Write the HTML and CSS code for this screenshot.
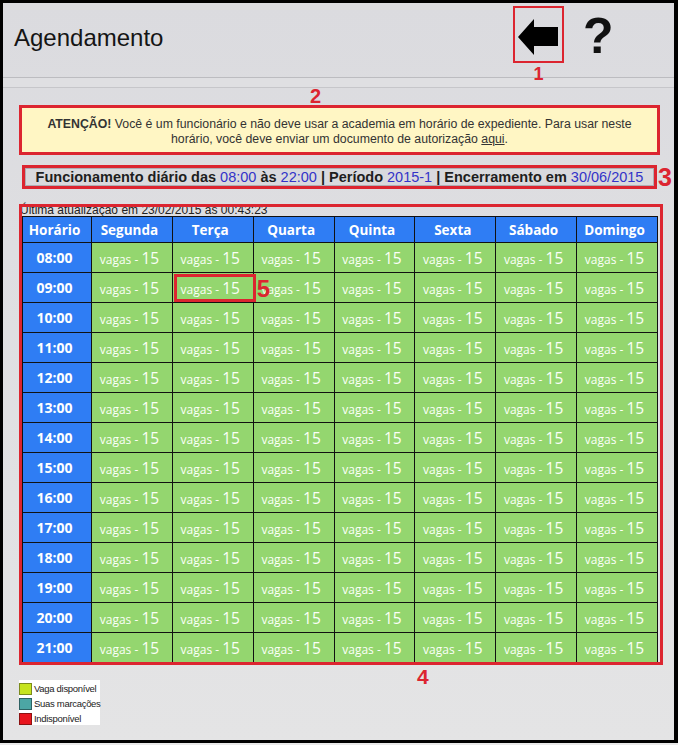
FILE: index.html
```html
<!DOCTYPE html>
<html lang="pt-BR">
<head>
<meta charset="utf-8">
<title>Agendamento</title>
<link rel="stylesheet" href="styles.css">
</head>
<body>
<div class="frame">
  <header class="topbar">
    <h1 class="title">Agendamento</h1>
    <div class="actions">
      <div class="back">
        <svg class="arrow" width="47" height="53" viewBox="0 0 47 53"><polygon points="3,29 19,11 19,19 43,19 43,38 19,38 19,47" fill="#000"/></svg>
        <span class="num num-1">1</span>
      </div>
      <span class="help">?</span>
    </div>
  </header>
  <div class="subbar"></div>
  <main class="content">
    <div class="warning">
      <span class="num num-2">2</span>
      <b>ATENÇÃO!</b> Você é um funcionário e não deve usar a academia em horário de expediente. Para usar neste horário, você deve enviar um documento de autorização <u>aqui</u>.
    </div>
    <div class="info">
      <div class="info-inner"><b>Funcionamento diário das</b> <span class="val">08:00</span> <b>às</b> <span class="val">22:00</span> <b>| Período</b> <span class="val">2015-1</span> <b>| Encerramento em</b> <span class="val">30/06/2015</span></div>
      <span class="num num-3">3</span>
    </div>
    <div class="schedule">
      <div class="updated">Última atualização em 23/02/2015 às 00:43:23</div>
      <table class="grid">
        <colgroup><col class="c-time"><col><col><col><col><col><col><col></colgroup>
        <thead>
          <tr><th>Horário</th><th>Segunda</th><th>Terça</th><th>Quarta</th><th>Quinta</th><th>Sexta</th><th>Sábado</th><th>Domingo</th></tr>
        </thead>
        <tbody>
          <tr><td class="time">08:00</td><td class="slot">vagas - <span class="n">15</span></td><td class="slot">vagas - <span class="n">15</span></td><td class="slot">vagas - <span class="n">15</span></td><td class="slot">vagas - <span class="n">15</span></td><td class="slot">vagas - <span class="n">15</span></td><td class="slot">vagas - <span class="n">15</span></td><td class="slot">vagas - <span class="n">15</span></td></tr>
          <tr><td class="time">09:00</td><td class="slot">vagas - <span class="n">15</span></td><td class="slot marked">vagas - <span class="n">15</span><span class="mark"></span><span class="num num-5">5</span></td><td class="slot">vagas - <span class="n">15</span></td><td class="slot">vagas - <span class="n">15</span></td><td class="slot">vagas - <span class="n">15</span></td><td class="slot">vagas - <span class="n">15</span></td><td class="slot">vagas - <span class="n">15</span></td></tr>
          <tr><td class="time">10:00</td><td class="slot">vagas - <span class="n">15</span></td><td class="slot">vagas - <span class="n">15</span></td><td class="slot">vagas - <span class="n">15</span></td><td class="slot">vagas - <span class="n">15</span></td><td class="slot">vagas - <span class="n">15</span></td><td class="slot">vagas - <span class="n">15</span></td><td class="slot">vagas - <span class="n">15</span></td></tr>
          <tr><td class="time">11:00</td><td class="slot">vagas - <span class="n">15</span></td><td class="slot">vagas - <span class="n">15</span></td><td class="slot">vagas - <span class="n">15</span></td><td class="slot">vagas - <span class="n">15</span></td><td class="slot">vagas - <span class="n">15</span></td><td class="slot">vagas - <span class="n">15</span></td><td class="slot">vagas - <span class="n">15</span></td></tr>
          <tr><td class="time">12:00</td><td class="slot">vagas - <span class="n">15</span></td><td class="slot">vagas - <span class="n">15</span></td><td class="slot">vagas - <span class="n">15</span></td><td class="slot">vagas - <span class="n">15</span></td><td class="slot">vagas - <span class="n">15</span></td><td class="slot">vagas - <span class="n">15</span></td><td class="slot">vagas - <span class="n">15</span></td></tr>
          <tr><td class="time">13:00</td><td class="slot">vagas - <span class="n">15</span></td><td class="slot">vagas - <span class="n">15</span></td><td class="slot">vagas - <span class="n">15</span></td><td class="slot">vagas - <span class="n">15</span></td><td class="slot">vagas - <span class="n">15</span></td><td class="slot">vagas - <span class="n">15</span></td><td class="slot">vagas - <span class="n">15</span></td></tr>
          <tr><td class="time">14:00</td><td class="slot">vagas - <span class="n">15</span></td><td class="slot">vagas - <span class="n">15</span></td><td class="slot">vagas - <span class="n">15</span></td><td class="slot">vagas - <span class="n">15</span></td><td class="slot">vagas - <span class="n">15</span></td><td class="slot">vagas - <span class="n">15</span></td><td class="slot">vagas - <span class="n">15</span></td></tr>
          <tr><td class="time">15:00</td><td class="slot">vagas - <span class="n">15</span></td><td class="slot">vagas - <span class="n">15</span></td><td class="slot">vagas - <span class="n">15</span></td><td class="slot">vagas - <span class="n">15</span></td><td class="slot">vagas - <span class="n">15</span></td><td class="slot">vagas - <span class="n">15</span></td><td class="slot">vagas - <span class="n">15</span></td></tr>
          <tr><td class="time">16:00</td><td class="slot">vagas - <span class="n">15</span></td><td class="slot">vagas - <span class="n">15</span></td><td class="slot">vagas - <span class="n">15</span></td><td class="slot">vagas - <span class="n">15</span></td><td class="slot">vagas - <span class="n">15</span></td><td class="slot">vagas - <span class="n">15</span></td><td class="slot">vagas - <span class="n">15</span></td></tr>
          <tr><td class="time">17:00</td><td class="slot">vagas - <span class="n">15</span></td><td class="slot">vagas - <span class="n">15</span></td><td class="slot">vagas - <span class="n">15</span></td><td class="slot">vagas - <span class="n">15</span></td><td class="slot">vagas - <span class="n">15</span></td><td class="slot">vagas - <span class="n">15</span></td><td class="slot">vagas - <span class="n">15</span></td></tr>
          <tr><td class="time">18:00</td><td class="slot">vagas - <span class="n">15</span></td><td class="slot">vagas - <span class="n">15</span></td><td class="slot">vagas - <span class="n">15</span></td><td class="slot">vagas - <span class="n">15</span></td><td class="slot">vagas - <span class="n">15</span></td><td class="slot">vagas - <span class="n">15</span></td><td class="slot">vagas - <span class="n">15</span></td></tr>
          <tr><td class="time">19:00</td><td class="slot">vagas - <span class="n">15</span></td><td class="slot">vagas - <span class="n">15</span></td><td class="slot">vagas - <span class="n">15</span></td><td class="slot">vagas - <span class="n">15</span></td><td class="slot">vagas - <span class="n">15</span></td><td class="slot">vagas - <span class="n">15</span></td><td class="slot">vagas - <span class="n">15</span></td></tr>
          <tr><td class="time">20:00</td><td class="slot">vagas - <span class="n">15</span></td><td class="slot">vagas - <span class="n">15</span></td><td class="slot">vagas - <span class="n">15</span></td><td class="slot">vagas - <span class="n">15</span></td><td class="slot">vagas - <span class="n">15</span></td><td class="slot">vagas - <span class="n">15</span></td><td class="slot">vagas - <span class="n">15</span></td></tr>
          <tr><td class="time">21:00</td><td class="slot">vagas - <span class="n">15</span></td><td class="slot">vagas - <span class="n">15</span></td><td class="slot">vagas - <span class="n">15</span></td><td class="slot">vagas - <span class="n">15</span></td><td class="slot">vagas - <span class="n">15</span></td><td class="slot">vagas - <span class="n">15</span></td><td class="slot">vagas - <span class="n">15</span></td></tr>
        </tbody>
      </table>
      <span class="num num-4">4</span>
    </div>
    <ul class="legend">
      <li><span class="sw sw-free"></span>Vaga disponível</li>
      <li><span class="sw sw-mine"></span>Suas marcações</li>
      <li><span class="sw sw-off"></span>Indisponível</li>
    </ul>
  </main>
</div>
</body>
</html>
```
FILE: styles.css
```css
* { box-sizing: border-box; }
html, body { margin: 0; padding: 0; }
body {
  width: 678px;
  height: 745px;
  overflow: hidden;
  background: #e9e9e9;
  font-family: "Liberation Sans", Arial, sans-serif;
  color: #222;
}
.frame {
  width: 678px;
  height: 743px;
  border: 3px solid #000;
  border-right-width: 4px;
  background: linear-gradient(#dbdbdf, #e4e4e5);
  display: flex;
  flex-direction: column;
}
.topbar {
  height: 75px;
  flex: none;
  border-bottom: 1px solid #bcbcc0;
  display: flex;
  align-items: flex-start;
  padding: 0 60px 0 11px;
}
.title {
  margin: 21px 0 0;
  font-size: 24px;
  line-height: 28px;
  font-weight: normal;
  color: #151515;
}
.actions {
  margin-left: auto;
  display: flex;
  align-items: flex-start;
}
.back {
  position: relative;
  margin-top: 3px;
  width: 51px;
  height: 57px;
  border: 2px solid #dc2530;
}
.arrow { display: block; }
.help {
  margin: 8px 0 0 19px;
  width: 31px;
  font-size: 50px;
  line-height: 50px;
  font-weight: bold;
  color: #111;
}
.subbar {
  height: 10px;
  flex: none;
  background: #dfdfe2;
  border-bottom: 1px solid #c6c6ca;
}
.content {
  padding: 17px 0 0 16px;
}
.num {
  position: absolute;
  color: #dc2530;
  font-weight: bold;
  font-family: "Liberation Sans", Arial, sans-serif;
  line-height: 1;
  z-index: 3;
}
.num-1 { font-size: 18px; left: 0; right: 0; text-align: center; top: calc(100% + 4px); }
.num-2 { font-size: 20px; left: 288px; top: -22px; }
.num-3 { font-size: 25px; left: calc(100% + 4px); top: -3px; }
.num-4 { font-size: 21px; left: 398px; top: calc(100% + 1px); }
.num-5 { font-size: 24px; left: 84px; top: 4px; }

.warning {
  position: relative;
  width: 641px;
  border: 3px solid #dc2530;
  background: #fff6c4;
  padding: 9px 10px 5px;
  text-align: center;
  font-size: 12.3px;
  line-height: 15px;
  color: #333;
}
.warning u { color: #333; }
.info {
  position: relative;
  margin: 10px 0 0 3px;
  width: 635px;
  border: 3px solid #dc2530;
  background: #d9d9dd;
}
.info-inner {
  border: 1px solid #aeaeb4;
  font-size: 14.5px;
  line-height: 16px;
  text-align: center;
  color: #1e1e1e;
  white-space: nowrap;
}
.info-inner .val { color: #3333c8; }
.schedule {
  position: relative;
  margin-top: 15px;
  width: 644px;
  padding-bottom: 2px;
}
.schedule::after {
  content: "";
  position: absolute;
  inset: 0;
  border: 3px solid #dc2530;
  z-index: 2;
  pointer-events: none;
}
.updated {
  font-size: 12px;
  line-height: 12px;
  padding-left: 1px;
  color: #222;
  white-space: nowrap;
}
.grid {
  margin-left: 3px;
  width: 636px;
  table-layout: fixed;
  border-collapse: collapse;
  border: 1px solid #111;
}
.c-time { width: 69px; }
.grid th, .grid td {
  border: 1px solid #111;
  padding: 0 5px 0 0;
  text-align: center;
  vertical-align: middle;
  white-space: nowrap;
}
.grid th {
  height: 26px;
  background: #2f7df4;
  color: #fff;
  font: bold 13.5px "Open Sans", "Liberation Sans", sans-serif;
}
.grid tbody tr { height: 30px; }
.grid td.time {
  background: #2f7df4;
  color: #fff;
  font: bold 14px "Open Sans", "Liberation Sans", sans-serif;
}
.grid td.slot {
  background: #94d66f;
  color: #fbfff8;
  font: 12px "Open Sans", "Liberation Sans", sans-serif;
}
.grid td.slot .n { font-size: 15.5px; }
.grid td.marked { position: relative; }
.mark {
  position: absolute;
  left: 1px;
  top: 1px;
  width: 82px;
  height: 28px;
  border: 3px solid #dc2530;
}
.legend {
  list-style: none;
  margin: 15px 0 0;
  padding: 1px 0 0;
  width: 81px;
  height: 45px;
  background: #fff;
}
.legend li {
  display: flex;
  align-items: center;
  height: 15px;
  font-size: 9.5px;
  letter-spacing: -0.3px;
  white-space: nowrap;
  color: #222;
}
.sw {
  width: 13px;
  height: 12px;
  margin-right: 2px;
  border: 1px solid #555;
  flex: none;
}
.sw-free { background: #c6e41f; border-color: #7b8b1c; }
.sw-mine { background: #4ca6a5; border-color: #2e6263; }
.sw-off { background: #e8151d; border-color: #8c1212; }
```
